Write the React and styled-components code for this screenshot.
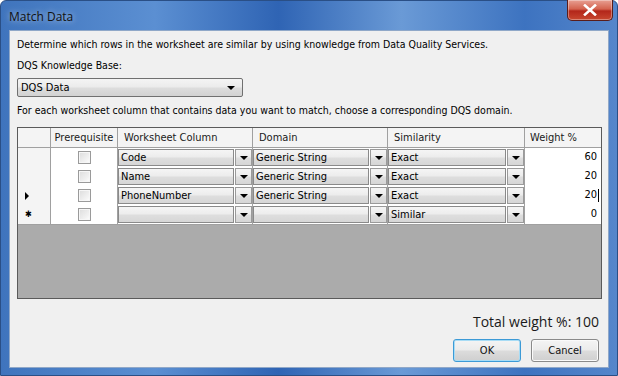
import React from "react";
import styled, { createGlobalStyle } from "styled-components";

const rows = [
    { marker: "", column: "Code", domain: "Generic String", similarity: "Exact", weight: "60" },
    { marker: "", column: "Name", domain: "Generic String", similarity: "Exact", weight: "20" },
    { marker: "current", column: "PhoneNumber", domain: "Generic String", similarity: "Exact", weight: "20", editing: true },
    { marker: "new", column: "", domain: "", similarity: "Similar", weight: "0" },
];

const App = () => {
    return (
        <>
            <GlobalStyle />
            <Window>
                <TitleBar>
                    <Title>Match Data</Title>
                    <CloseButton aria-label="Close">
                        <svg width="14" height="12" viewBox="0 0 14 12">
                            <path
                                d="M2 1.5 L12 10.5 M12 1.5 L2 10.5"
                                stroke="#ffffff"
                                strokeWidth="2.6"
                                strokeLinecap="square"
                            />
                        </svg>
                    </CloseButton>
                </TitleBar>
                <Content>
                    <Text>
                        Determine which rows in the worksheet are similar by using knowledge from Data Quality Services.
                    </Text>
                    <Text className="label">DQS Knowledge Base:</Text>
                    <KbSelect>
                        <span>DQS Data</span>
                        <Arrow />
                    </KbSelect>
                    <Text className="hint">
                        For each worksheet column that contains data you want to match, choose a corresponding DQS domain.
                    </Text>
                    <Grid>
                        <HeadRow>
                            <div className="rowhead" />
                            <div className="center">Prerequisite</div>
                            <div>Worksheet Column</div>
                            <div>Domain</div>
                            <div>Similarity</div>
                            <div>Weight %</div>
                        </HeadRow>
                        {rows.map((row, i) => (
                            <DataRow key={i}>
                                <RowHead>
                                    {row.marker === "current" && <Pointer />}
                                    {row.marker === "new" && <Star>✱</Star>}
                                </RowHead>
                                <CheckCell>
                                    <Check />
                                </CheckCell>
                                <ComboCell>
                                    <ComboText>{row.column}</ComboText>
                                    <ComboButton>
                                        <Arrow />
                                    </ComboButton>
                                </ComboCell>
                                <ComboCell>
                                    <ComboText>{row.domain}</ComboText>
                                    <ComboButton>
                                        <Arrow />
                                    </ComboButton>
                                </ComboCell>
                                <ComboCell>
                                    <ComboText>{row.similarity}</ComboText>
                                    <ComboButton>
                                        <Arrow />
                                    </ComboButton>
                                </ComboCell>
                                <WeightCell>
                                    {row.weight}
                                    {row.editing && <Caret />}
                                </WeightCell>
                            </DataRow>
                        ))}
                    </Grid>
                    <Total>Total weight %: 100</Total>
                    <Buttons>
                        <Button $default>OK</Button>
                        <Button>Cancel</Button>
                    </Buttons>
                </Content>
            </Window>
        </>
    );
};

export default App;

const GlobalStyle = createGlobalStyle`
    html, body {
        margin: 0;
        padding: 0;
        width: 618px;
        height: 376px;
        overflow: hidden;
        background: #ffffff;
    }
    * {
        box-sizing: border-box;
    }
`;

const Window = styled.div`
    width: 618px;
    height: 376px;
    display: flex;
    flex-direction: column;
    padding: 0 8px 7px 8px;
    background: linear-gradient(90deg, #3f74bd 0%, #5b8fd2 25%, #2f64b4 45%, #6a9ad6 65%, #3d73c0 85%, #5586cb 100%);
    border: 1px solid #2a4f86;
    border-radius: 6px 6px 0 0;
`;

const TitleBar = styled.div`
    height: 29px;
    flex: none;
    display: flex;
    align-items: center;
    justify-content: space-between;
    position: relative;
`;

const Title = styled.div`
    font-family: "Open Sans", "Noto Sans", sans-serif;
    font-size: 12px;
    color: #111111;
    margin-top: 2px;
    text-shadow: 0 0 6px rgba(255, 255, 255, 0.7);
`;

const CloseButton = styled.div`
    position: absolute;
    right: -4px;
    top: -1px;
    width: 46px;
    height: 21px;
    border: 1px solid #5a1d1a;
    border-top: none;
    border-radius: 0 0 5px 5px;
    background: linear-gradient(180deg, #e8a093 0%, #d4634f 45%, #b3261a 55%, #c8472f 100%);
    display: flex;
    align-items: center;
    justify-content: center;
    box-shadow: inset 0 0 0 1px rgba(255, 255, 255, 0.35);
`;

const Content = styled.div`
    flex: 1;
    background: #f0f0f0;
    border: 1px solid #90a8c8;
    padding: 5px 9px 0 7px;
    display: flex;
    flex-direction: column;
    font-family: "DejaVu Sans Condensed", "DejaVu Sans", sans-serif;
    font-size: 10.5px;
    color: #000000;
`;

const Text = styled.div`
    height: 16px;
    line-height: 16px;
    margin-bottom: 5px;
    &.label {
        margin-bottom: 6px;
    }
    &.hint {
        margin-top: 5px;
        margin-bottom: 8px;
    }
`;

const Arrow = styled.span`
    display: inline-block;
    width: 0;
    height: 0;
    border-left: 4px solid transparent;
    border-right: 4px solid transparent;
    border-top: 4px solid #000000;
`;

const KbSelect = styled.div`
    width: 226px;
    height: 19px;
    margin-top: -1px;
    border: 1px solid #707070;
    border-radius: 2px;
    background: linear-gradient(180deg, #f4f4f4 0%, #ebebeb 48%, #dddddd 52%, #d2d2d2 100%);
    display: flex;
    align-items: center;
    justify-content: space-between;
    padding: 0 7px 0 3px;
    font-size: 11px;
`;

const Grid = styled.div`
    width: 585px;
    height: 172px;
    margin-top: 1px;
    border: 1px solid #5a5a5a;
    background: #ababab;
    display: flex;
    flex-direction: column;
    font-size: 11px;
`;

const columns = "33px 67px 135px 135px 137px 1fr";

const HeadRow = styled.div`
    display: grid;
    grid-template-columns: ${columns};
    height: 20px;
    background: #f4f4f4;
    & > div {
        border-right: 1px solid #a0a0a0;
        border-bottom: 1px solid #a0a0a0;
        line-height: 19px;
        padding-left: 6px;
        color: #1a1a1a;
    }
    & > div.center {
        text-align: center;
        padding-left: 0;
    }
    & > div:last-child {
        border-right: none;
        padding-left: 5px;
    }
`;

const DataRow = styled.div`
    display: grid;
    grid-template-columns: ${columns};
    height: 19px;
    & > div {
        border-right: 1px solid #a0a0a0;
        border-bottom: 1px solid #a0a0a0;
    }
    & > div:last-child {
        border-right: none;
    }
`;

const RowHead = styled.div`
    background: #f4f4f4;
    display: flex;
    align-items: center;
    padding-left: 7px;
`;

const Pointer = styled.span`
    width: 0;
    height: 0;
    border-top: 4px solid transparent;
    border-bottom: 4px solid transparent;
    border-left: 4px solid #000000;
`;

const Star = styled.span`
    font-size: 9px;
    line-height: 1;
`;

const CheckCell = styled.div`
    background: #ffffff;
    display: flex;
    align-items: center;
    justify-content: center;
`;

const Check = styled.span`
    width: 13px;
    height: 13px;
    border: 1px solid #9a9a9a;
    background: linear-gradient(135deg, #dcdcdc 0%, #f2f2f2 70%, #ffffff 100%);
    box-shadow: inset 0 0 0 1px #f6f6f6;
`;

const ComboCell = styled.div`
    background: #ffffff;
    display: grid;
    grid-template-columns: 1fr 17px;
    gap: 1px;
    padding: 1px 0 1px 0;
`;

const ComboText = styled.span`
    border: 1px solid #8a8a8a;
    background: linear-gradient(180deg, #f5f5f5 0%, #ececec 48%, #dedede 52%, #d6d6d6 100%);
    padding-left: 2px;
    line-height: 15px;
    white-space: nowrap;
    overflow: hidden;
`;

const ComboButton = styled.span`
    border: 1px solid #9a9a9a;
    background: linear-gradient(180deg, #f5f5f5 0%, #ececec 48%, #dedede 52%, #d6d6d6 100%);
    display: flex;
    align-items: center;
    justify-content: center;
`;

const WeightCell = styled.div`
    background: #ffffff;
    text-align: right;
    padding-right: 4px;
    line-height: 18px;
`;

const Caret = styled.span`
    display: inline-block;
    width: 1px;
    height: 13px;
    background: #000000;
    vertical-align: middle;
    margin-left: 1px;
    margin-right: -2px;
`;

const Total = styled.div`
    margin-top: 13px;
    text-align: right;
    font-family: "Open Sans", "Noto Sans", sans-serif;
    font-size: 14px;
    color: #1a1a1a;
    line-height: 20px;
`;

const Buttons = styled.div`
    display: flex;
    justify-content: flex-end;
    gap: 10px;
    margin-top: 7px;
`;

const Button = styled.div`
    width: 68px;
    height: 23px;
    border: 1px solid ${(p) => (p.$default ? "#3c9ad6" : "#8a8a8a")};
    border-radius: 3px;
    background: linear-gradient(180deg, #f4f4f4 0%, #ebebeb 48%, #dcdcdc 52%, #cfcfcf 100%);
    box-shadow: ${(p) => (p.$default ? "inset 0 0 0 1px #a8dcf5" : "inset 0 0 0 1px #fafafa")};
    display: flex;
    align-items: center;
    justify-content: center;
    font-size: 11px;
    color: #111111;
`;
